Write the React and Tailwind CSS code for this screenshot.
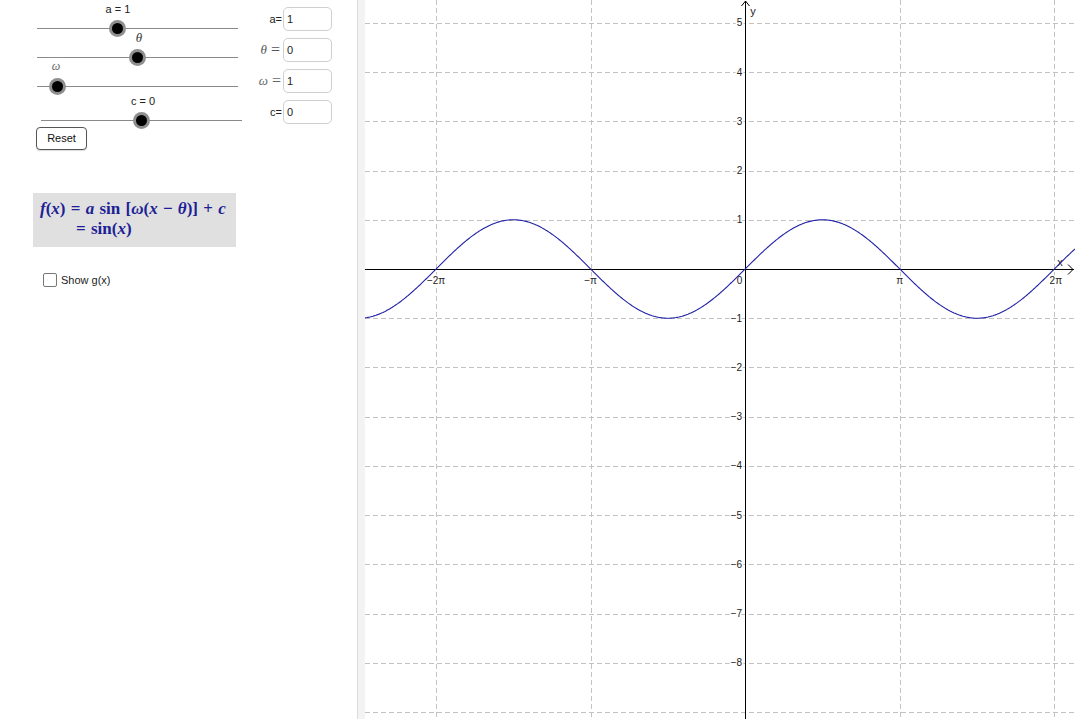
import React from 'react';

const SANS = { fontFamily: '"Liberation Sans", Arial, sans-serif' };
const SERIF = { fontFamily: '"Liberation Serif", "DejaVu Serif", serif' };

// graph geometry (svg coordinates, svg starts at page x = 365)
const W = 710;
const H = 719;
const OX = 380.2;
const OY = 269;
const UX = 49.2;
const UY = 49.23;

const px = (v) => Math.round(v) + 0.5;

const curvePath = () => {
    let d = '';
    for (let i = 0; i <= W; i += 1) {
        const x = (i - OX) / UX;
        const y = OY - UY * Math.sin(x);
        d += (i === 0 ? 'M' : 'L') + i + ' ' + y.toFixed(2) + ' ';
    }
    return d;
};

const Knob = ({ className }) => (
    <div className={`absolute w-[17px] h-[17px] rounded-full bg-[#8f8f8f] flex items-center justify-center ${className}`}>
        <div className="w-[11px] h-[11px] rounded-full bg-black" />
    </div>
);

const Slider = ({ wrap, knob, labelPos, children }) => (
    <div className={`relative border-b border-[#8a8a8a] ${wrap}`}>
        <div className={`absolute -translate-x-1/2 whitespace-nowrap leading-none ${labelPos}`}>{children}</div>
        <Knob className={knob} />
    </div>
);

const InputRow = ({ label, value, box }) => (
    <div className="flex items-center justify-end">
        <div className="mr-[1px] flex items-center">{label}</div>
        <div className={`w-[49px] border border-[#cfcfcf] rounded-[5px] bg-white flex items-center pl-[3px] text-[11px] text-[#222] ${box}`} style={SANS}>
            {value}
        </div>
    </div>
);

const Graph = () => {
    const ys = [5, 4, 3, 2, 1, 0, -1, -2, -3, -4, -5, -6, -7, -8, -9];
    const xs = [-2, -1, 1, 2];
    const xLabels = { '-2': '−2π', '-1': '−π', '1': 'π', '2': '2π' };
    return (
        <svg width={W} height={H} className="block">
            {ys.filter((k) => k !== 0).map((k) => (
                <line key={'h' + k} x1="0" x2={W} y1={px(OY - k * UY)} y2={px(OY - k * UY)} stroke="#c2c2c2" strokeDasharray="5 3" />
            ))}
            {xs.map((k) => (
                <line key={'v' + k} y1="0" y2={H} x1={px(OX + k * Math.PI * UX)} x2={px(OX + k * Math.PI * UX)} stroke="#c2c2c2" strokeDasharray="5 3" />
            ))}

            <g style={SANS} fontSize="10" fill="#222" stroke="#fff" strokeWidth="3" paintOrder="stroke" strokeLinejoin="round">
                {ys.filter((k) => k !== 0 && k > -9).map((k) => (
                    <text key={'yl' + k} x={OX - 3} y={OY - k * UY + 3.5} textAnchor="end">
                        {k < 0 ? '−' + -k : k}
                    </text>
                ))}
                {xs.map((k) => (
                    <text key={'xl' + k} x={OX + k * Math.PI * UX + (k === 2 ? 1.5 : 0)} y={OY + 15} textAnchor="middle">
                        {xLabels[k]}
                    </text>
                ))}
                <text x={OX - 3} y={OY + 15} textAnchor="end">0</text>
            </g>

            {/* axes */}
            <line x1="0" x2={W - 1} y1={OY + 0.5} y2={OY + 0.5} stroke="#000" />
            <line y1="1" y2={H} x1={px(OX)} x2={px(OX)} stroke="#000" />
            <polyline points={`${W - 7},${OY - 4.5} ${W - 2},${OY + 0.5} ${W - 7},${OY + 5.5}`} fill="none" stroke="#000" />
            <polyline points={`${px(OX) - 4},6 ${px(OX)},1 ${px(OX) + 4},6`} fill="none" stroke="#000" />

            <g style={SANS} fontSize="11" fill="#222">
                <text x="695" y="266" textAnchor="middle">x</text>
                <text x="388" y="15" textAnchor="middle">y</text>
            </g>

            <path d={curvePath()} fill="none" stroke="#2222a6" strokeWidth="1.1" />
        </svg>
    );
};

const MathI = ({ children }) => <span className="italic">{children}</span>;

export default function App() {
    return (
        <div className="w-[1075px] h-[719px] bg-white flex overflow-hidden">
            {/* left panel */}
            <div className="w-[357px] h-full flex flex-col shrink-0">
                <div className="flex items-start">
                    <div className="flex flex-col">
                        <Slider wrap="ml-[37px] w-[201px] h-[29px]" knob="left-[72px] top-[20px]" labelPos="left-[81px] top-[2px]">
                            <span className="block text-[11px] leading-[14px] text-[#222]" style={SANS}>a = 1</span>
                        </Slider>
                        <Slider wrap="ml-[37px] w-[201px] h-[29px]" knob="left-[92px] top-[20px]" labelPos="left-[102px] top-[1px]">
                            <span className="block text-[13px] leading-[16px] italic text-[#333]" style={SERIF}>θ</span>
                        </Slider>
                        <Slider wrap="ml-[37px] w-[201px] h-[29px]" knob="left-[12px] top-[20px]" labelPos="left-[19px] top-[0px]">
                            <span className="block text-[12px] leading-[16px] italic text-[#666]" style={SERIF}>ω</span>
                        </Slider>
                        <Slider wrap="ml-[41px] w-[201px] h-[34px]" knob="left-[92px] top-[25px]" labelPos="left-[102px] top-[7px]">
                            <span className="block text-[11px] leading-[14px] text-[#222]" style={SANS}>c = 0</span>
                        </Slider>
                        <button
                            className="mt-[6px] ml-[36px] w-[51px] h-[23px] border border-[#555] rounded-[4px] bg-white text-[11px] text-[#111] shadow-[0_1px_1px_rgba(0,0,0,0.15)]"
                            style={SANS}
                        >
                            Reset
                        </button>
                    </div>

                    <div className="ml-auto mr-[25px] pt-[7px] flex flex-col gap-[7px]">
                        <InputRow
                            label={<span className="text-[11px] text-[#222]" style={SANS}>a=</span>}
                            value="1"
                            box="h-[24px]"
                        />
                        <InputRow
                            label={
                                <span className="text-[#555] flex items-center mr-[2px]" style={SERIF}>
                                    <span className="italic text-[13px]">θ</span>
                                    <span className="text-[16px] ml-[4px]">=</span>
                                </span>
                            }
                            value="0"
                            box="h-[24px]"
                        />
                        <InputRow
                            label={
                                <span className="text-[#666] flex items-center mr-[1px]" style={SERIF}>
                                    <span className="italic text-[13px]">ω</span>
                                    <span className="text-[16px] ml-[4px]">=</span>
                                </span>
                            }
                            value="1"
                            box="h-[24px]"
                        />
                        <InputRow
                            label={<span className="text-[11px] text-[#222]" style={SANS}>c=</span>}
                            value="0"
                            box="h-[24px]"
                        />
                    </div>
                </div>

                {/* formula */}
                <div
                    className="mt-[43px] ml-[33px] w-[203px] h-[54px] bg-[#e0e0e0] pt-[6px] pl-[7px] text-[17px] leading-[20px] font-bold text-[#1e1e96] whitespace-nowrap [word-spacing:1px]"
                    style={SERIF}
                >
                    <div>
                        <MathI>f</MathI>(<MathI>x</MathI>) = <MathI>a</MathI> sin [<MathI>ω</MathI>(<MathI>x</MathI> − <MathI>θ</MathI>)] + <MathI>c</MathI>
                    </div>
                    <div className="ml-[36px]">
                        = sin(<MathI>x</MathI>)
                    </div>
                </div>

                {/* checkbox */}
                <label className="mt-[25px] ml-[43px] flex items-center">
                    <span className="w-[14px] h-[14px] border border-[#777] rounded-[2px] bg-white" />
                    <span className="ml-[4px] text-[11px] text-[#222]" style={SANS}>Show g(x)</span>
                </label>
            </div>

            {/* divider */}
            <div className="w-[8px] h-full shrink-0 bg-[#f3f3f3] border-l border-[#dcdcdc]" />

            {/* graphics view */}
            <div className="flex-1 h-full">
                <Graph />
            </div>
        </div>
    );
}
